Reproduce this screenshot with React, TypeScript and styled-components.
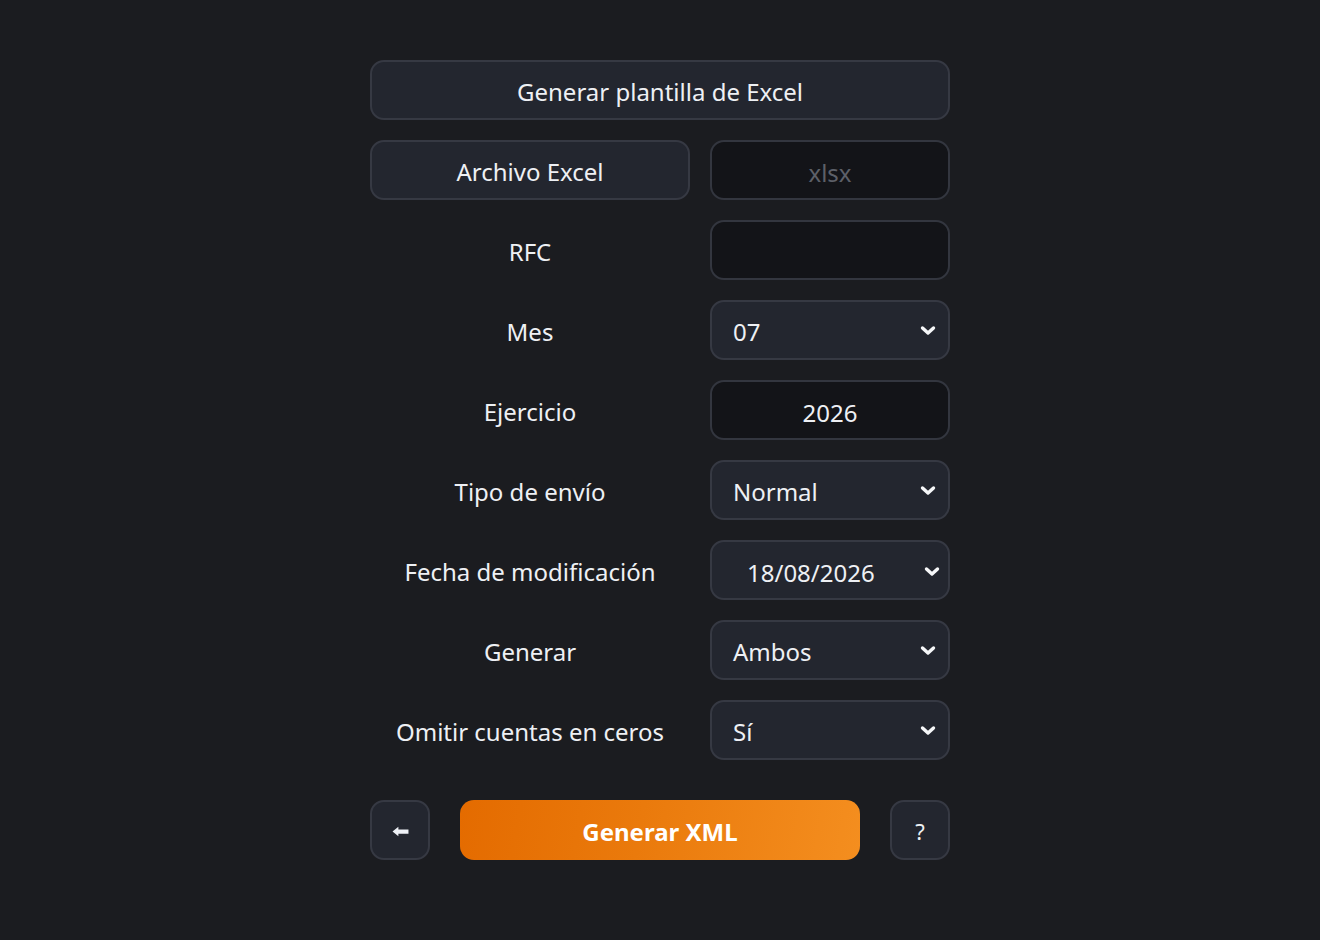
import React from 'react'
import styled, { createGlobalStyle } from 'styled-components'

const GlobalStyle = createGlobalStyle`
  html, body {
    margin: 0;
    padding: 0;
    background: #1b1c20;
  }
  body {
    font-family: "Noto Sans", "Open Sans", sans-serif;
    color: #eef0f4;
  }
`

const Chevron = () => (
  <svg width="16" height="11" viewBox="0 0 16 11">
    <path d="M2.5 3 L8 8 L13.5 3" fill="none" stroke="#f6f7f9" strokeWidth="3.4" strokeLinecap="round" strokeLinejoin="round" />
  </svg>
)

const BackArrow = () => (
  <svg width="17" height="13" viewBox="0 0 16 12">
    <path d="M0.5 6 L6 1.5 L6 4 L15.5 4 L15.5 8 L6 8 L6 10.5 Z" fill="#eef0f6" />
  </svg>
)

interface SelectProps {
  value: string
  date?: boolean
}

const Select: React.FC<SelectProps> = ({ value, date }) => (
  <S.Select $date={date}>
    <span>{value}</span>
    <S.ChevronWrap>
      <Chevron />
    </S.ChevronWrap>
  </S.Select>
)

export default function App() {
  return (
    <>
      <GlobalStyle />
      <S.Page>
        <S.Form>
          <S.WideButton>Generar plantilla de Excel</S.WideButton>

          <S.Button>Archivo Excel</S.Button>
          <S.Input $placeholder>xlsx</S.Input>

          <S.Label>RFC</S.Label>
          <S.Input />

          <S.Label>Mes</S.Label>
          <Select value="07" />

          <S.Label>Ejercicio</S.Label>
          <S.Input>2026</S.Input>

          <S.Label>Tipo de envío</S.Label>
          <Select value="Normal" />

          <S.Label>Fecha de modificación</S.Label>
          <Select value="18/08/2026" date />

          <S.Label>Generar</S.Label>
          <Select value="Ambos" />

          <S.Label>Omitir cuentas en ceros</S.Label>
          <Select value="Sí" />
        </S.Form>

        <S.Actions>
          <S.IconButton>
            <BackArrow />
          </S.IconButton>
          <S.Primary>Generar XML</S.Primary>
          <S.IconButton>?</S.IconButton>
        </S.Actions>
      </S.Page>
    </>
  )
}

const S = {
  Page: styled.div`
    width: 580px;
    margin: 0 auto;
    padding-top: 60px;
    display: flex;
    flex-direction: column;
    gap: 40px;
  `,
  Form: styled.div`
    display: grid;
    grid-template-columns: 320px 240px;
    grid-auto-rows: 60px;
    column-gap: 20px;
    row-gap: 20px;
  `,
  Button: styled.div`
    box-sizing: border-box;
    display: flex;
    align-items: center;
    justify-content: center;
    padding-top: 3px;
    border: 2px solid #363943;
    border-radius: 14px;
    background: #23262f;
    font-size: 24px;
    color: #eef0f4;
  `,
  WideButton: styled.div`
    grid-column: 1 / -1;
    box-sizing: border-box;
    display: flex;
    align-items: center;
    justify-content: center;
    padding-top: 3px;
    border: 2px solid #363943;
    border-radius: 14px;
    background: #23262f;
    font-size: 24px;
    color: #eef0f4;
  `,
  Input: styled.div<{ $placeholder?: boolean }>`
    box-sizing: border-box;
    display: flex;
    align-items: center;
    justify-content: center;
    padding-top: 5px;
    border: 2px solid #33363f;
    border-radius: 14px;
    background: #131418;
    font-size: 24px;
    color: ${(p) => (p.$placeholder ? '#5d6068' : '#eef0f4')};
  `,
  Label: styled.div`
    display: flex;
    align-items: center;
    justify-content: center;
    padding-top: 3px;
    font-size: 24px;
    color: #eef0f4;
  `,
  Select: styled.div<{ $date?: boolean }>`
    box-sizing: border-box;
    display: flex;
    align-items: center;
    justify-content: space-between;
    padding: ${(p) => (p.$date ? '5px 8px 0 35px' : '3px 12px 0 21px')};
    border: 2px solid #363943;
    border-radius: 14px;
    background: #23262f;
    font-size: 24px;
    color: #eef0f4;
  `,
  ChevronWrap: styled.span`
    display: flex;
    align-items: center;
    margin-bottom: 3px;
  `,
  Actions: styled.div`
    display: flex;
    gap: 30px;
    height: 60px;
  `,
  IconButton: styled.div`
    box-sizing: border-box;
    width: 60px;
    display: flex;
    align-items: center;
    justify-content: center;
    padding-top: 2px;
    border: 2px solid #363943;
    border-radius: 14px;
    background: #23262f;
    font-size: 22px;
    color: #eef0f4;
  `,
  Primary: styled.div`
    flex: 1;
    display: flex;
    align-items: center;
    justify-content: center;
    padding-top: 2px;
    border-radius: 14px;
    background: linear-gradient(100deg, #e46b00 0%, #ea7a0c 45%, #f48e1f 100%);
    font-size: 24px;
    font-weight: 700;
    color: #ffffff;
  `,
}
